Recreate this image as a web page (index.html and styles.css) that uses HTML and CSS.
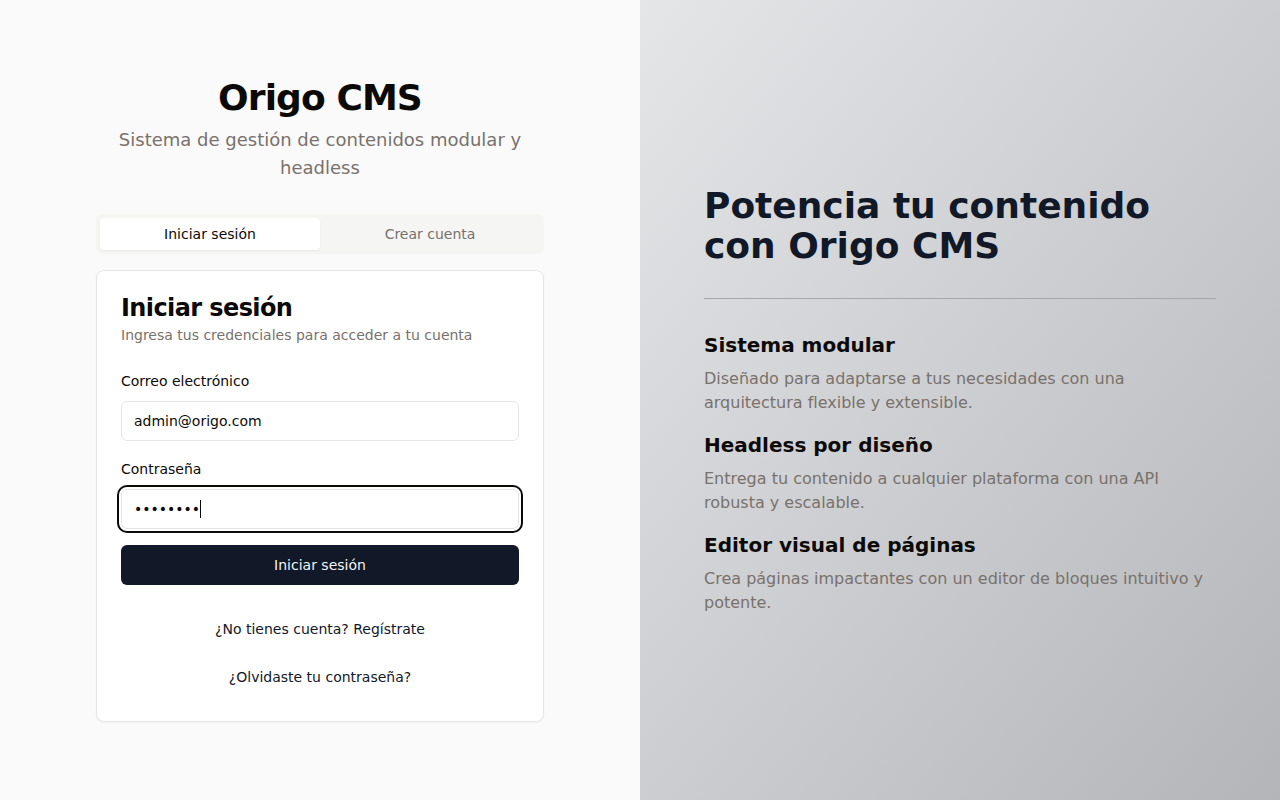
FILE: index.html
```html
<!DOCTYPE html>
<html lang="es">
<head>
<meta charset="utf-8">
<title>Origo CMS</title>
<link rel="stylesheet" href="styles.css">
</head>
<body>
<div class="page">
  <section class="left">
    <div class="auth">
      <h1 class="brand">Origo CMS</h1>
      <p class="tagline">Sistema de gestión de contenidos modular y headless</p>
      <div class="tabs">
        <button class="tab active" type="button">Iniciar sesión</button>
        <button class="tab" type="button">Crear cuenta</button>
      </div>
      <div class="card">
        <h2 class="card-title">Iniciar sesión</h2>
        <p class="card-desc">Ingresa tus credenciales para acceder a tu cuenta</p>
        <form class="form">
          <label class="label" for="email">Correo electrónico</label>
          <input class="input" id="email" type="email" value="admin@origo.com">
          <label class="label label-gap" for="pw">Contraseña</label>
          <div class="field">
            <input class="input focused" id="pw" type="password" value="12345678">
            <span class="caret"></span>
          </div>
          <button class="submit" type="button">Iniciar sesión</button>
          <a class="link link-first" href="#">¿No tienes cuenta? Regístrate</a>
          <a class="link" href="#">¿Olvidaste tu contraseña?</a>
        </form>
      </div>
    </div>
  </section>
  <section class="right">
    <div class="promo">
      <h2 class="promo-title">Potencia tu contenido con Origo CMS</h2>
      <hr class="divider">
      <div class="features">
        <div class="feature">
          <h3 class="feature-title">Sistema modular</h3>
          <p class="feature-text">Diseñado para adaptarse a tus necesidades con una arquitectura flexible y extensible.</p>
        </div>
        <div class="feature">
          <h3 class="feature-title">Headless por diseño</h3>
          <p class="feature-text">Entrega tu contenido a cualquier plataforma con una API robusta y escalable.</p>
        </div>
        <div class="feature">
          <h3 class="feature-title">Editor visual de páginas</h3>
          <p class="feature-text">Crea páginas impactantes con un editor de bloques intuitivo y potente.</p>
        </div>
      </div>
    </div>
  </section>
</div>
</body>
</html>
```
FILE: styles.css
```css
* { box-sizing: border-box; }
html, body { margin: 0; padding: 0; height: 100%; }
body {
  font-family: "DejaVu Sans", "Liberation Sans", sans-serif;
  color: #0c0a09;
}
.page {
  display: flex;
  width: 100%;
  height: 800px;
}
.left {
  width: 50%;
  background: #fafafa;
  display: flex;
  align-items: center;
  justify-content: center;
}
.auth {
  width: 448px;
  display: flex;
  flex-direction: column;
}
.brand {
  margin: 0;
  font-size: 36px;
  line-height: 40px;
  font-weight: 700;
  letter-spacing: -0.9px;
  text-align: center;
  color: #0c0a09;
}
.tagline {
  margin: 8px 0 0;
  font-size: 18px;
  line-height: 28px;
  text-align: center;
  color: #78716c;
}
.tabs {
  margin-top: 32px;
  height: 40px;
  background: #f5f5f4;
  border-radius: 6px;
  padding: 4px;
  display: grid;
  grid-template-columns: 1fr 1fr;
}
.tab {
  border: 0;
  background: transparent;
  font-family: inherit;
  font-size: 14px;
  color: #78716c;
  border-radius: 4px;
  height: 32px;
  padding: 0;
}
.tab.active {
  background: #ffffff;
  color: #0c0a09;
  box-shadow: 0 1px 2px rgba(0,0,0,0.05);
}
.card {
  margin-top: 16px;
  background: #ffffff;
  border: 1px solid #e7e5e4;
  border-radius: 8px;
  padding: 24px;
  box-shadow: 0 1px 2px rgba(0,0,0,0.04);
}
.card-title {
  margin: 0;
  font-size: 24px;
  line-height: 24px;
  font-weight: 700;
  letter-spacing: -0.6px;
  color: #0c0a09;
  padding-top: 1px;
}
.card-desc {
  margin: 5px 0 0;
  font-size: 14px;
  line-height: 20px;
  color: #78716c;
}
.form {
  margin-top: 26px;
  display: flex;
  flex-direction: column;
}
.label {
  font-size: 14px;
  line-height: 20px;
  color: #0c0a09;
  margin-bottom: 10px;
}
.label-gap { margin-top: 18px; }
.field {
  position: relative;
}
.input {
  display: block;
  height: 40px;
  width: 100%;
  border: 1px solid #e7e5e4;
  border-radius: 6px;
  padding: 0 12px;
  font-family: inherit;
  font-size: 14px;
  color: #0c0a09;
  background: #ffffff;
  outline: none;
}
.input.focused {
  outline: 2px solid #0c0a09;
  outline-offset: 2px;
}
.caret {
  position: absolute;
  left: 79px;
  top: 11px;
  width: 1px;
  height: 18px;
  background: #0c0a09;
}
.submit {
  margin-top: 16px;
  height: 40px;
  border: 0;
  border-radius: 6px;
  background: #111827;
  color: #f3f4f6;
  font-family: inherit;
  font-size: 14px;
}
.link {
  height: 40px;
  display: flex;
  align-items: center;
  justify-content: center;
  font-size: 14px;
  color: #111827;
  text-decoration: none;
  margin-top: 8px;
}
.link-first { margin-top: 24px; }
.right {
  width: 50%;
  background: linear-gradient(to bottom right, #e5e6e8, #b4b5b9);
  display: flex;
  align-items: center;
  padding: 0 64px;
}
.promo {
  width: 512px;
}
.promo-title {
  margin: 0;
  font-size: 36px;
  line-height: 40px;
  font-weight: 700;
  color: #111827;
}
.divider {
  margin: 32px 0;
  border: 0;
  height: 1px;
  background: #a6a7ac;
}
.features {
  display: flex;
  flex-direction: column;
  gap: 16px;
}
.feature-title {
  margin: 0;
  font-size: 20px;
  line-height: 28px;
  font-weight: 700;
  color: #0c0a09;
}
.feature-text {
  margin: 8px 0 0;
  font-size: 16px;
  line-height: 24px;
  color: #78716c;
}
```
